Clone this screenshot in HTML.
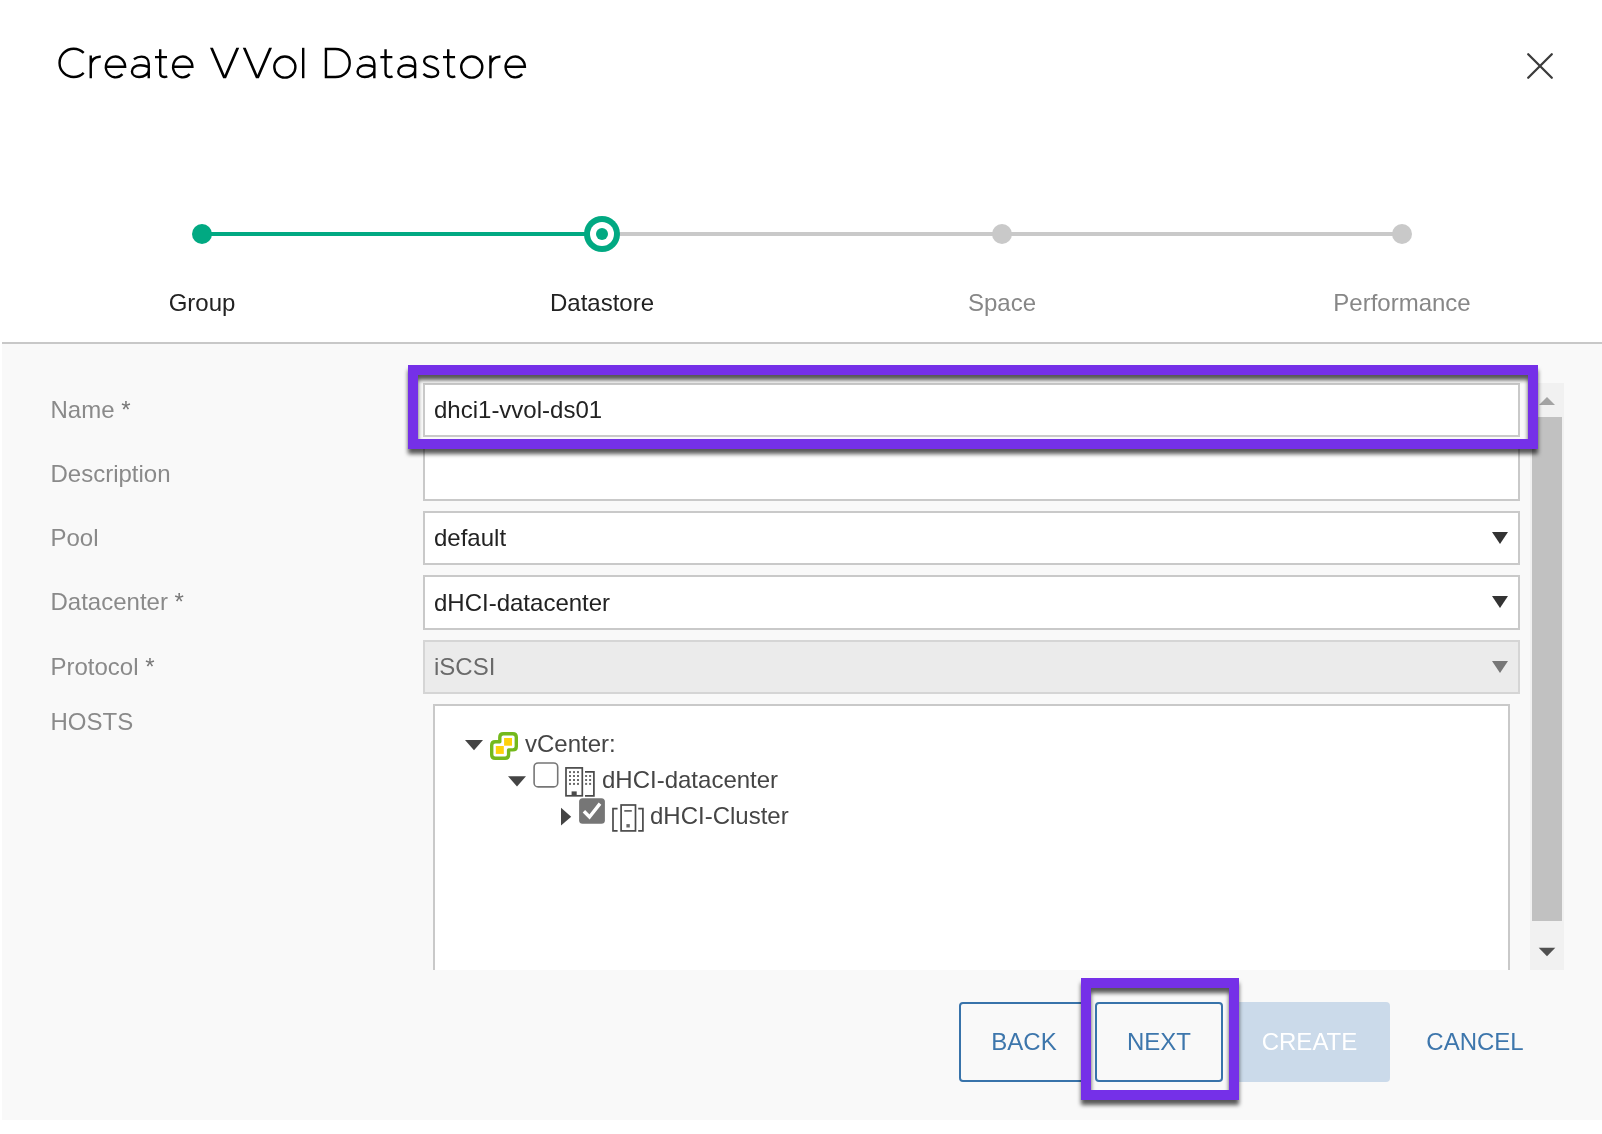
<!DOCTYPE html>
<html>
<head>
<meta charset="utf-8">
<title>Create VVol Datastore</title>
<style>
*{box-sizing:border-box;margin:0;padding:0}
html,body{width:1602px;height:1134px;background:#fff;overflow:hidden}
body{font-family:"Liberation Sans",sans-serif;position:relative;color:#222;-webkit-font-smoothing:antialiased}
#root{position:absolute;left:0;top:0;width:1602px;height:1134px;will-change:transform}
.abs{position:absolute}
#panel{left:2px;top:344px;width:1600px;height:776px;background:#f9f9f9}
#sep{left:2px;top:342px;width:1600px;height:2px;background:#c8c8c8}
.lbl{left:50.5px;font-size:24px;line-height:28px;color:#8a8a8a;white-space:nowrap}
.lbl b{font-weight:normal;color:#777}
.step{font-size:24px;line-height:28px;width:300px;text-align:center;top:289px;color:#222;white-space:nowrap}
.step.g{color:#878787}
.inp{left:423px;width:1097px;height:54px;border:2px solid #c9c9c9;background:#fff;font-size:24px;line-height:50px;padding-left:9px;color:#222;white-space:nowrap}
.inp.dis{background:#ebebeb;color:#6a6a6a;border-color:#d5d5d5}
.arr{position:absolute;right:10px;top:19px;width:0;height:0;border-left:8px solid transparent;border-right:8px solid transparent;border-top:12px solid #333}
.dis .arr{border-top-color:#777}
.hl{border:10px solid #7530e8;filter:drop-shadow(0 5.2px 2px rgba(0,0,0,.65))}
.btn{top:1002px;height:80px;font-size:24px;line-height:76px;text-align:center;color:#3d76ac;border:2px solid #3873aa;border-radius:4px;white-space:nowrap}
.tree{font-size:24px;line-height:28px;color:#454545;white-space:nowrap}
</style>
</head>
<body>
<div id="root">
<!--TITLE--><svg class="abs" style="left:0;top:0" width="600" height="100" viewBox="0 0 600 100" fill="none" stroke="#000" stroke-width="2.4"><defs><path id="ge" d="M-9.65 66.8 H9.65 A9.65 10.4 0 1 0 6.94 74.17"/><path id="ga" d="M-14.8 59.2 C-12.4 57.4 -9.8 56.6 -7.2 56.6 C-2.6 56.6 0 59.2 0 63.8 V78.2 M0 67.2 C-2.6 66 -5.6 65.3 -8.4 65.3 C-13.4 65.3 -16.8 67.8 -16.8 71.4 C-16.8 74.6 -13.8 77 -9.6 77 C-4.6 77 0 74 0 70.2"/><path id="gt" d="M0 49.3 V72.5 C0 75.6 1.6 77 4 77 C5.2 77 6.2 76.7 7 76.2 M-5.2 57.1 H6.8"/><path id="gr" d="M0 55.5 V78.2 M0 66 C0 60 4 56.4 10 56.8"/><circle id="go" cx="0" cy="67.1" r="10.55"/></defs><path d="M83.7 52.9 A14.15 14.15 0 1 0 83.7 72.9"/><use href="#gr" x="90.75"/><use href="#ge" x="115.5"/><use href="#ga" x="148.75"/><use href="#gt" x="160.2"/><use href="#ge" x="182.75"/><path d="M210 47.8 H212.9 L224.6 74.9 L236.29999999999998 47.8 H239.2 L226.04999999999998 78.2 H223.15Z" fill="#000" stroke="none"/><path d="M242.8 47.8 H245.70000000000002 L257.4 74.9 L269.1 47.8 H272 L258.84999999999997 78.2 H255.95Z" fill="#000" stroke="none"/><use href="#go" x="284.85"/><path d="M303.2 47.8 V78.2"/><path d="M325.95 47.8 V78.2 M325.95 49 H335.3 C343.8 49 349.7 54.8 349.7 63 C349.7 71.2 343.8 77 335.3 77 H325.95"/><use href="#ga" x="374.35"/><use href="#gt" x="385.55"/><use href="#ga" x="415.1"/><path d="M437.6 59.3 C435.5 57.4 433 56.4 430.6 56.4 C426.8 56.4 424.2 58.4 424.2 61.3 C424.2 64.5 427 65.6 431 66.8 C435.5 68.1 438.2 69.3 438.2 72.3 C438.2 75.2 435.5 77 431.6 77 C428.4 77 425.6 75.8 423.4 73.8"/><use href="#gt" x="448.2"/><use href="#go" x="471.75"/><use href="#gr" x="490.45"/><use href="#ge" x="515.25"/></svg><!--/TITLE-->
<svg class="abs" style="left:1520px;top:46px" width="40" height="40" viewBox="1520 46 40 40"><path d="M1528.2 54.2 L1551.8 77.8 M1551.8 54.2 L1528.2 77.8" stroke="#3c3c3c" stroke-width="2.3" fill="none" stroke-linecap="round"/></svg>

<!-- stepper -->
<svg class="abs" style="left:0;top:200px" width="1602" height="70" viewBox="0 0 1602 70">
<rect x="602" y="32" width="800" height="4" fill="#c9c9c9"/>
<rect x="202" y="32" width="400" height="4" fill="#01a982"/>
<circle cx="202" cy="34" r="10" fill="#01a982"/>
<circle cx="602" cy="34" r="18" fill="#01a982"/>
<circle cx="602" cy="34" r="12" fill="#fff"/>
<circle cx="602" cy="34" r="6" fill="#01a982"/>
<circle cx="1002" cy="34" r="10" fill="#c9c9c9"/>
<circle cx="1402" cy="34" r="10" fill="#c9c9c9"/>
</svg>
<div class="abs step" style="left:52px">Group</div>
<div class="abs step" style="left:452px">Datastore</div>
<div class="abs step g" style="left:852px">Space</div>
<div class="abs step g" style="left:1252px">Performance</div>

<div id="sep" class="abs"></div>
<div id="panel" class="abs"></div>

<!-- labels -->
<div class="abs lbl" style="top:396px">Name <b>*</b></div>
<div class="abs lbl" style="top:460px">Description</div>
<div class="abs lbl" style="top:524px">Pool</div>
<div class="abs lbl" style="top:588px">Datacenter <b>*</b></div>
<div class="abs lbl" style="top:653px">Protocol <b>*</b></div>
<div class="abs lbl" style="top:708px">HOSTS</div>

<!-- inputs -->
<div class="abs inp" style="top:383px">dhci1-vvol-ds01</div>
<div class="abs inp" style="top:447px"></div>
<div class="abs inp" style="top:511px">default<i class="arr"></i></div>
<div class="abs inp" style="top:575px;height:55px;line-height:52px">dHCI-datacenter<i class="arr"></i></div>
<div class="abs inp dis" style="top:640px">iSCSI<i class="arr"></i></div>

<!-- hosts tree box -->
<div class="abs" style="left:433px;top:704px;width:1077px;height:266px;border:2px solid #c9c9c9;border-bottom:none;background:#fff"></div>


<!-- tree -->
<svg class="abs" style="left:440px;top:720px" width="260" height="130" viewBox="440 720 260 130">
<path d="M465 740 H483 L474 750.3Z" fill="#444"/>
<path d="M508 776.3 H526 L517 786.5Z" fill="#444"/>
<path d="M561 807.8 V825.6 L571.2 816.7Z" fill="#444"/>
<!-- vcenter icon -->
<path d="M503.3 733.7 H512.8 Q516.3 733.7 516.3 737.2 V746.4 Q516.3 749.9 512.8 749.9 H508.6 V754.8 Q508.6 758.3 505.1 758.3 H495.2 Q491.7 758.3 491.7 754.8 V745.3 Q491.7 741.8 495.2 741.8 H499.8 V737.2 Q499.8 733.7 503.3 733.7 Z" fill="#fff" stroke="#74b91c" stroke-width="3.4" stroke-linejoin="round"/>
<rect x="504.1" y="738" width="7.9" height="7.7" fill="#fdd10b"/>
<rect x="495.8" y="746" width="8" height="7.9" fill="#fdd10b"/>
<!-- checkbox unchecked -->
<rect x="534.1" y="763" width="23.6" height="23.9" rx="4" fill="#fff" stroke="#767676" stroke-width="1.6"/>
<!-- datacenter icon -->
<g fill="none" stroke="#4a4a4a" stroke-width="1.7">
<rect x="566" y="767.9" width="16.3" height="27.9"/>
<path d="M585 771.9 H593.9 V795.8 H585"/>
</g>
<g fill="#6a6a6a">
<rect x="569" y="771.1" width="2" height="2"/><rect x="573" y="771.1" width="2" height="2"/><rect x="577" y="771.1" width="2" height="2"/>
<rect x="569" y="775" width="2" height="2"/><rect x="573" y="775" width="2" height="2"/><rect x="577" y="775" width="2" height="2"/>
<rect x="569" y="779" width="2" height="2"/><rect x="573" y="779" width="2" height="2"/><rect x="577" y="779" width="2" height="2"/>
<rect x="569" y="782.9" width="2" height="2"/><rect x="573" y="782.9" width="2" height="2"/><rect x="577" y="782.9" width="2" height="2"/>
<rect x="585.1" y="775" width="2" height="2"/><rect x="589.1" y="775" width="2" height="2"/>
<rect x="585.1" y="779" width="2" height="2"/><rect x="589.1" y="779" width="2" height="2"/>
<rect x="585.1" y="782.9" width="2" height="2"/><rect x="589.1" y="782.9" width="2" height="2"/>
</g>
<rect x="571.6" y="791.4" width="5.1" height="4.4" fill="#4a4a4a"/>
<!-- checkbox checked -->
<rect x="579.1" y="798.3" width="25.8" height="25.5" rx="3.5" fill="#767676"/>
<path d="M583.9 811.2 L589.5 817 L600 803.6" fill="none" stroke="#fff" stroke-width="3.4"/>
<!-- cluster icon -->
<g fill="none" stroke="#4a4a4a" stroke-width="1.7">
<path d="M617.6 808.7 H613 V830.9 H617.6"/>
<path d="M638.2 808.7 H642.9 V830.9 H638.2"/>
<rect x="621.1" y="805" width="14.4" height="25.9"/>
<path d="M624.3 810.9 H631.8" stroke-width="1.5"/>
</g>
<rect x="626.4" y="824.1" width="3.4" height="3.4" fill="#6a6a6a"/>
</svg>
<div class="abs tree" style="left:525px;top:730px">vCenter:</div>
<div class="abs tree" style="left:602px;top:766px">dHCI-datacenter</div>
<div class="abs tree" style="left:650px;top:802px">dHCI-Cluster</div>

<!-- scrollbar -->
<div class="abs" style="left:1530px;top:383px;width:34px;height:587px;background:#f1f1f1"></div>
<div class="abs" style="left:1532px;top:417px;width:30px;height:504px;background:#c1c1c1"></div>
<svg class="abs" style="left:1530px;top:383px" width="34" height="587" viewBox="0 0 34 587"><path d="M9 22 L17 14 L25 22Z" fill="#a3a3a3"/><path d="M8.7 564.7 H25.3 L17 573.2Z" fill="#505050"/></svg>

<!-- highlight 1 -->
<div class="abs hl" style="left:408px;top:365px;width:1130px;height:84px"></div>

<!-- buttons -->
<div class="abs btn" style="left:959px;width:130px">BACK</div>
<div class="abs btn" style="left:1095px;width:128px">NEXT</div>
<div class="abs btn" style="left:1229px;width:161px;background:#cbdaea;border-color:#cbdaea;color:#fff">CREATE</div>
<div class="abs btn" style="left:1400px;width:150px;border-color:transparent">CANCEL</div>
<div class="abs hl" style="left:1081px;top:978px;width:158px;height:122px"></div>
</div>
</body>
</html>
